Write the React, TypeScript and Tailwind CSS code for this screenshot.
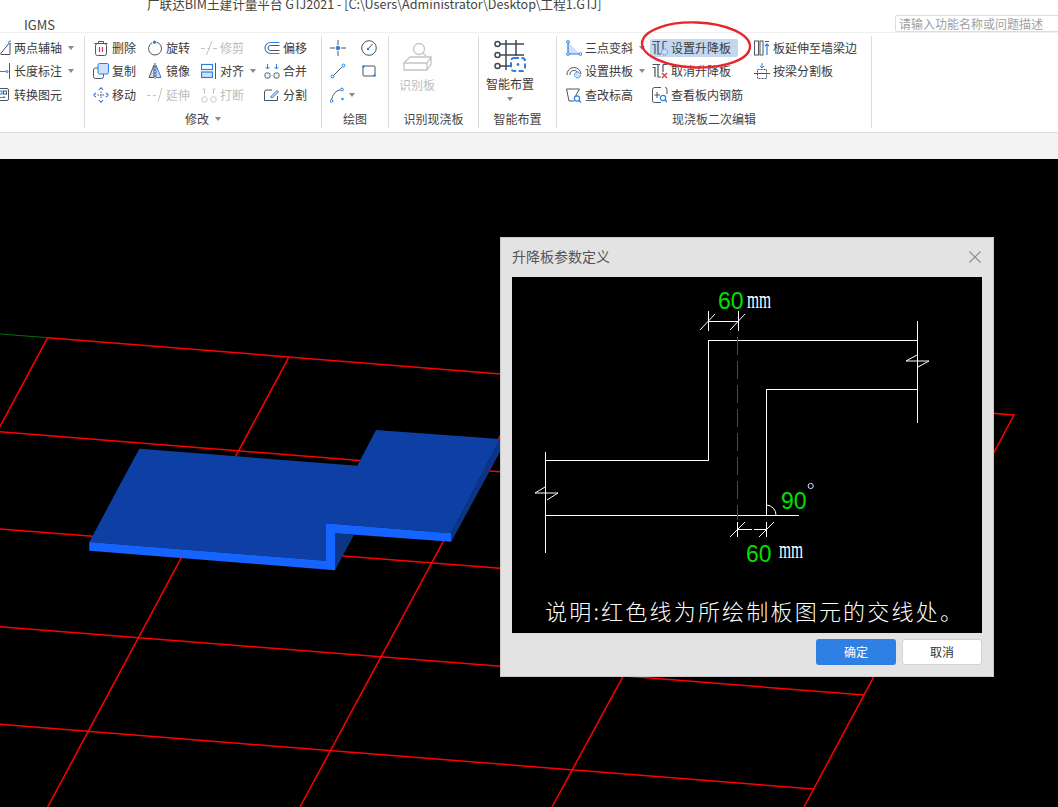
import type { ReactNode } from 'react';

const D = '#4b5563';
const B = '#2b7fe3';
const L = '#cfe1f8';
const G = '#c4c4c4';

function Ic({ children, className = 'w-4 h-4' }: { children: ReactNode; className?: string }) {
  return (
    <svg viewBox="0 0 16 16" fill="none" stroke={D} strokeWidth={1} className={`${className} shrink-0`}>
      {children}
    </svg>
  );
}

const Dot = ({ x, y, r = 1.4 }: { x: number; y: number; r?: number }) => <circle cx={x} cy={y} r={r} fill="#fff" stroke={B} />;

const Caret = () => (
  <svg viewBox="0 0 6 4" className="w-[6px] h-[4px] ml-[3px] shrink-0">
    <path d="M0 0h6L3 4z" fill="#8a8a8a" />
  </svg>
);

const icons = {
  twoPoint: <Ic><path d="M6 14.5H15M15 14.5V2" stroke={D} /><path d="M5 14.5 15 2" stroke={D} /><Dot x={15} y={2.5} /></Ic>,
  length: <Ic><path d="M0 8.5H12" stroke={B} /><Dot x={12} y={8.5} r={1} /><path d="M14.5 0V16" /></Ic>,
  convert: <Ic><rect x="1.5" y="1.5" width="12" height="12" rx="1.5" /><rect x="4" y="4" width="3" height="3" stroke={B} /><rect x="8.5" y="4" width="3" height="3" /><path d="M5 10.5h5m0 0-1.5-1.5" stroke={B} /></Ic>,
  del: <Ic><path d="M1.5 3.5h13M5.5 3.5V1.5h5v2" /><rect x="2.5" y="3.5" width="11" height="12" rx="2" /><path d="M6.5 7v5M9.5 7v5" stroke="#e03a3a" strokeWidth={1.2} /></Ic>,
  rotate: <Ic><path d="M9.5 2.2A6.5 6.5 0 1 1 5 2.8" /><circle cx="7.5" cy="2.2" r="1.6" fill={B} stroke="none" /></Ic>,
  trim: <Ic><path d="M0 8.5h4M6.5 8.5h2.5M12 8.5h4" stroke={G} /><path d="M11 1 5.5 15" stroke={G} /></Ic>,
  offset: <Ic><path d="M15.5 2.5H6.5a5.5 5.5 0 0 0 0 11h9" stroke={B} strokeWidth={1.2} /><path d="M15.5 5.5H6.5a2.5 2.5 0 0 0 0 5h9" /></Ic>,
  copy: <Ic><rect x="0.5" y="5" width="10" height="10.5" rx="2" /><rect x="5" y="0.5" width="10.5" height="10.5" rx="1.5" fill={L} stroke={B} /></Ic>,
  mirror: <Ic><path d="M7 2 2 14.5h5z" fill="#d9dde3" /><path d="M9 2l5 12.5H9z" fill={L} stroke={B} /><path d="M8 0v16" stroke={D} strokeDasharray="2 1" /></Ic>,
  align: <Ic><rect x="0.5" y="1.5" width="11" height="5" fill="#fff" stroke={B} strokeWidth={1.2} /><rect x="0.5" y="9" width="11" height="5.5" fill={L} stroke={B} strokeWidth={1.2} /><path d="M14.5 0v16" /></Ic>,
  merge: <Ic><rect x="1" y="10" width="5" height="5" rx="1.5" /><rect x="10" y="10" width="5" height="5" rx="1.5" /><path d="M3.5 1v5m-2-2 2 2 2-2M12.5 1v5m-2-2 2 2 2-2" stroke={B} /></Ic>,
  split: <Ic><path d="M8 3H2.5a2 2 0 0 0-2 2v8.5h13V9" /><path d="M6.5 10 13 3.5 14.5 5 8 11z" fill={L} stroke={B} /></Ic>,
  move: <Ic><path d="M8 4.5V11.5M4.5 8H11.5" stroke={D} strokeDasharray="1.5 1" /><path d="M8 .5l-2 2.5M8 .5l2 2.5M8 15.5l-2-2.5M8 15.5l2-2.5M.5 8 3 6M.5 8 3 10M15.5 8 13 6M15.5 8 13 10" stroke={B} strokeWidth={1.2} /></Ic>,
  extend: <Ic><path d="M0 8.5h3.5M6 8.5h3" stroke={G} /><path d="M15 1 11 15" stroke={G} /></Ic>,
  breakOff: <Ic><rect x="1" y="10" width="5" height="5" rx="1.5" stroke={G} /><rect x="10" y="10" width="5" height="5" rx="1.5" stroke={G} /><path d="M3.5 2v5M1.5 2h2M12.5 2v5M12.5 2h2" stroke={G} /></Ic>,
  point: <Ic><path d="M0 8h5M11 8h5M8 0v5M8 11v5" /><circle cx="8" cy="8" r="2.2" fill={B} stroke="none" /></Ic>,
  dial: <Ic className="w-[16px] h-[16px]"><circle cx="8" cy="8" r="7.3" /><path d="M7 9 11.5 4" stroke={D} /><circle cx="7" cy="9" r="1.2" fill={B} stroke="none" /></Ic>,
  line: <Ic><path d="M2.5 13.5 13.5 2.5" stroke={D} /><Dot x={2.5} y={13.5} /><Dot x={13.5} y={2.5} /></Ic>,
  rect: <Ic><rect x="2" y="3" width="12" height="10" rx="1" /><circle cx="2.5" cy="3.5" r="1.2" fill={B} stroke="none" /><circle cx="13.5" cy="12.5" r="1.2" fill={B} stroke="none" /></Ic>,
  arc: <Ic><path d="M1.5 14C2 7.5 6 3 12 2.5" /><Dot x={1.5} y={14} /><Dot x={12} y={2.5} /><circle cx="12.5" cy="12" r="1.2" fill={B} stroke="none" /></Ic>,
  slope: <Ic><path d="M2 2 14 14H2z" fill={L} stroke="none" /><path d="M2 2V14H14" stroke={B} strokeWidth={1.2} /><Dot x={2} y={2} /><Dot x={2} y={14} /><Dot x={14.5} y={14} /></Ic>,
  arch: <Ic><path d="M1 12a7 7 0 0 1 14-1" /><path d="M4 12a4 4 0 0 1 8-1" /><circle cx="11.5" cy="12" r="3" fill={L} stroke={B} strokeDasharray="1.5 .8" /></Ic>,
  elevation: <Ic><path d="M.5 2h13L10 8v2M.5 2 3 14h5" /><circle cx="11" cy="11.5" r="2.6" stroke={B} strokeWidth={1.2} /><path d="m13 13.5 2 2" stroke={B} strokeWidth={1.2} /></Ic>,
  setRaise: <Ic><path d="M.5 1.5H6V14h3" strokeWidth={1.2} /><path d="M.5 4.5H3V14M6 1.5h2M11 1.5h4M11 1.5V9" strokeWidth={1.2} /><circle cx="12.5" cy="12" r="3" fill={L} stroke={B} strokeDasharray="1.5 .8" /></Ic>,
  cancelRaise: <Ic><path d="M.5 1.5H6V14h3" strokeWidth={1.2} /><path d="M.5 4.5H3V14M6 1.5h2M11 1.5h4M11 1.5V9" strokeWidth={1.2} /><path d="m10 10 5 5m0-5-5 5" stroke="#e03a3a" strokeWidth={1.3} /></Ic>,
  rebar: <Ic><path d="M9 .5H2.5a2 2 0 0 0-2 2v11a2 2 0 0 0 2 2H9M13 .5a2 2 0 0 1 2 2V7" /><path d="M5 5v6M2.5 8H8" /><circle cx="11" cy="11" r="2.7" stroke={B} strokeWidth={1.2} /><path d="m13 13 2 2" stroke={B} strokeWidth={1.2} /></Ic>,
  extendEdge: <Ic><rect x="0.5" y="1" width="4" height="14" /><rect x="6" y="1" width="3" height="14" /><path d="M13 15V4m-2 2 2-2 2 2" stroke={B} strokeWidth={1.2} /><path d="M11 1.5h4" /></Ic>,
  splitBeam: <Ic><path d="M8 0v5m-2-2 2 2 2-2" stroke={B} /><rect x="3.5" y="6.5" width="9" height="9" strokeDasharray="2 1" /><path d="M0 10.5h16" /></Ic>,
};

function Item({ icon, label, caret, off, active }: { icon: ReactNode; label: string; caret?: boolean; off?: boolean; active?: boolean }) {
  return (
    <div className={`h-[23.5px] flex items-center ${active ? 'relative' : ''}`}>
      <div className={`flex items-center gap-[3px] ${active ? 'h-[18px] w-[88px] pl-[2px] bg-[#c3d8ef] rounded-[2px]' : ''}`}>
        {icon}
        <span className={`text-[12px] leading-none whitespace-nowrap ${off ? 'text-[#bdbdbd]' : 'text-[#3a3a3a]'}`}>{label}</span>
        {caret && <Caret />}
      </div>
    </div>
  );
}

function Group({ title, width, caret, children }: { title: string; width: string; caret?: boolean; children: ReactNode }) {
  return (
    <div className={`${width} h-[92px] shrink-0 flex flex-col border-r border-[#dcdcdc]`}>
      <div className="h-[76px] flex">{children}</div>
      <div className="flex-1 pt-[3px] flex items-center justify-center gap-[3px] text-[12px] text-[#444]">
        {title}
        {caret && <Caret />}
      </div>
    </div>
  );
}

function Canvas() {
  return (
    <svg viewBox="0 159 1058 648" className="w-full h-full block">
      <path d="M0 334 47.7 337.7" stroke="#0b6b14" strokeWidth={1} />
      <g stroke="#ff0000" strokeWidth={1.5} fill="none">
        <path d="M47.7 337.7 1014 415 804 807" />
        <path d="M0 431.7 500 471.7 960 510" />
        <path d="M0 529 500 568.3 920 602" />
        <path d="M0 626.7 864 695" />
        <path d="M0 724.3 813.6 789" />
        <path d="M47.7 337.7 0 426.7" />
        <path d="M288.7 357.3 47.7 807" />
        <path d="M532 377 300 807" />
        <path d="M775 397 552 807" />
      </g>
      <polygon points="451.3,533.3 500,439 500,452 451.3,541.7" fill="#0c3586" />
      <polygon points="139.3,448.7 357.3,465.7 376,430 500,439 451.3,533.3 326,523.3 326,560.7 89.3,542" fill="#0e3fa5" />
      <polygon points="335,533.3 354,534.7 335,570.3" fill="#0c3586" />
      <polygon points="89.3,542 326,560.7 326,523.3 451.3,533.3 451.3,541.7 335,533.3 335,570.3 89.3,550.7" fill="#1664ff" />
    </svg>
  );
}

function Diagram() {
  return (
    <svg viewBox="512 277 470 356" className="w-[470px] h-[356px] block bg-black font-['Liberation_Sans',sans-serif]">
      <g stroke="#fff" strokeWidth={1} fill="none" shapeRendering="crispEdges">
        <path d="M545.5 452V553M545.5 460.5H708.5V340.5H918M545.5 515.5H799M766.5 515.5V389.5H917.5M917.5 321V423" />
        <path d="M708.5 311V331M738.5 311V331M708.5 321.5H738.5M737.5 522V537M766.5 522V537M737.5 529.5H752M754 529.5H766.5" />
      </g>
      <g stroke="#fff" strokeWidth={1} fill="none">
        <path d="M700 330 715 314M730 330 745 314M730 537 745 522M759 537 774 522" />
        <path d="M917 355 906 361H929L918 367M545 487 535 493H558L547 500" />
        <path d="M766.5 505A10 10 0 0 1 776 515" />
      </g>
      <path d="M737.5 337V520" stroke="#c8141c" strokeWidth={1} strokeDasharray="18 6" />
      <g fill="#00e000" fontSize={23}>
        <text x={718} y={309}>60</text>
        <text x={781} y={509}>90</text>
        <text x={746} y={562}>60</text>
      </g>
      <g fill="#fff" fontSize={15.5} fontFamily="Liberation Serif, serif">
        <text transform="translate(747 307.5) scale(1 1.6)">mm</text>
        <text transform="translate(779 558) scale(1 1.6)">mm</text>
      </g>
      <circle cx={810.7} cy={486} r={2.6} stroke="#d6ecff" fill="none" />
      <text x={545} y={620} fill="#fff" fontSize={22} letterSpacing={2.2} fontWeight={300} fontFamily="Noto Sans CJK SC, sans-serif">说明:红色线为所绘制板图元的交线处。</text>
    </svg>
  );
}

export default function App() {
  return (
    <div className="relative w-[1058px] h-[807px] overflow-hidden flex flex-col bg-white font-['Noto_Sans_CJK_SC',sans-serif]">
      {/* Title + tabs */}
      <div className="h-[33px] shrink-0 relative border-b border-[#efefef]">
        <div className="-mt-[5px] pl-[147px] text-[12.6px] leading-[18px] text-[#444] whitespace-nowrap">
          广联达BIM土建计量平台 GTJ2021 - [C:\Users\Administrator\Desktop\工程1.GTJ]
        </div>
        <div className="pl-[24px] pt-[4px] text-[13px] leading-[16px] text-[#444]">IGMS</div>
        <div className="absolute left-[895px] top-[15px] w-[170px] h-[17px] border border-[#dddddd] rounded-[2px] pl-[3px] text-[12px] leading-[15px] text-[#a0a0a0]">
          请输入功能名称或问题描述
        </div>
      </div>

      {/* Ribbon */}
      <div className="h-[100px] shrink-0 pt-[3px] flex border-b border-[#dddddd]">
        <Group title="" width="w-[85px]">
          <div className="-ml-[5px]">
            <Item icon={icons.twoPoint} label="两点辅轴" caret />
            <Item icon={icons.length} label="长度标注" caret />
            <Item icon={icons.convert} label="转换图元" />
          </div>
        </Group>
        <Group title="修改" width="w-[237px]" caret>
          <div className="pl-[8px] flex">
            <div className="w-[54px]">
              <Item icon={icons.del} label="删除" />
              <Item icon={icons.copy} label="复制" />
              <Item icon={icons.move} label="移动" />
            </div>
            <div className="w-[54px]">
              <Item icon={icons.rotate} label="旋转" />
              <Item icon={icons.mirror} label="镜像" />
              <Item icon={icons.extend} label="延伸" off />
            </div>
            <div className="w-[63px]">
              <Item icon={icons.trim} label="修剪" off />
              <Item icon={icons.align} label="对齐" caret />
              <Item icon={icons.breakOff} label="打断" off />
            </div>
            <div>
              <Item icon={icons.offset} label="偏移" />
              <Item icon={icons.merge} label="合并" />
              <Item icon={icons.split} label="分割" />
            </div>
          </div>
        </Group>
        <Group title="绘图" width="w-[67px]">
          <div className="pl-[8px] flex">
            <div className="w-[31px]">
              <Item icon={icons.point} label="" />
              <Item icon={icons.line} label="" />
              <div className="h-[23.5px] flex items-center">{icons.arc}<Caret /></div>
            </div>
            <div>
              <Item icon={icons.dial} label="" />
              <Item icon={icons.rect} label="" />
            </div>
          </div>
        </Group>
        <Group title="识别现浇板" width="w-[90px]">
          <div className="pl-[10px] pt-[6px] w-[36px] box-content flex flex-col items-center">
            <svg viewBox="0 0 30 30" className="w-[30px] h-[30px]" fill="none" stroke={G} strokeWidth={1.3}>
              <circle cx="17" cy="7" r="5.5" />
              <path d="m21 11 3 3" />
              <path d="M2 21 8 15H29L25 21zM2 21V28H25V21M25 28 29 22V15" />
            </svg>
            <span className="mt-[5px] text-[12px] leading-[16px] text-[#bdbdbd] whitespace-nowrap">识别板</span>
          </div>
        </Group>
        <Group title="智能布置" width="w-[78px]">
          <div className="pl-[7px] pt-[4px] w-[48px] box-content flex flex-col items-center">
            <svg viewBox="0 0 32 32" className="w-[32px] h-[32px]" fill="none" stroke="#3f4854" strokeWidth={1.5}>
              <path d="M4 4H30M4 15H30M4 26H16M12 0V30M22 0V16" />
              <circle cx="3.5" cy="4" r="2.5" fill="#fff" />
              <circle cx="3.5" cy="15" r="2.5" fill="#fff" />
              <circle cx="3.5" cy="26" r="2.5" fill="#fff" />
              <rect x="17" y="18" width="14" height="13" rx="3" fill="#fff" stroke={B} strokeWidth={2} strokeDasharray="5 2.5" />
              <circle cx="24" cy="24.5" r="1.4" fill={B} stroke="none" />
            </svg>
            <span className="mt-[4px] text-[12px] leading-[16px] text-[#3a3a3a] whitespace-nowrap">智能布置</span>
            <svg viewBox="0 0 6 4" className="w-[6px] h-[4px] mt-[5px]"><path d="M0 0h6L3 4z" fill="#8a8a8a" /></svg>
          </div>
        </Group>
        <Group title="现浇板二次编辑" width="w-[315px]">
          <div className="pl-[9px] flex">
            <div className="w-[84px]">
              <Item icon={icons.slope} label="三点变斜" caret />
              <Item icon={icons.arch} label="设置拱板" caret />
              <Item icon={icons.elevation} label="查改标高" />
            </div>
            <div className="w-[104px]">
              <Item icon={icons.setRaise} label="设置升降板" active />
              <div className="pl-[2px]">
                <Item icon={icons.cancelRaise} label="取消升降板" />
                <Item icon={icons.rebar} label="查看板内钢筋" />
              </div>
            </div>
            <div>
              <Item icon={icons.extendEdge} label="板延伸至墙梁边" />
              <Item icon={icons.splitBeam} label="按梁分割板" />
            </div>
          </div>
        </Group>
      </div>

      <div className="h-[26px] shrink-0 bg-[#f3f3f3]" />

      {/* Model view */}
      <div className="relative flex-1 bg-black">
        <Canvas />
        <div className="absolute left-[500px] top-[78px] w-[494px] h-[440px] bg-[#e3e3e3] border border-[#c9c9c9] flex flex-col">
          <div className="h-[39px] shrink-0 pl-[11px] pr-[12px] pb-[2px] flex items-center justify-between">
            <span className="text-[14px] text-[#555]">升降板参数定义</span>
            <svg viewBox="0 0 12 12" className="w-[12px] h-[12px]" stroke="#8c8c8c" strokeWidth={1.1}>
              <path d="M.5.5l11 11m0-11-11 11" />
            </svg>
          </div>
          <div className="px-[11px]"><Diagram /></div>
          <div className="pt-[6px] pr-[11px] flex justify-end gap-[6px]">
            <button className="w-[80px] h-[26px] rounded-[3px] bg-[#2f80e4] text-white text-[12px]">确定</button>
            <button className="w-[80px] h-[26px] rounded-[3px] bg-white border border-[#d2d2d2] text-[#333] text-[12px]">取消</button>
          </div>
        </div>
      </div>

      {/* hand-drawn callout round the highlighted button */}
      <svg viewBox="0 0 120 60" className="absolute left-[636px] top-[16px] w-[120px] h-[60px] pointer-events-none" fill="none">
        <ellipse cx="60" cy="29" rx="54" ry="22.5" stroke="#e8262a" strokeWidth={2.4} transform="rotate(2 60 29)" />
      </svg>
    </div>
  );
}
